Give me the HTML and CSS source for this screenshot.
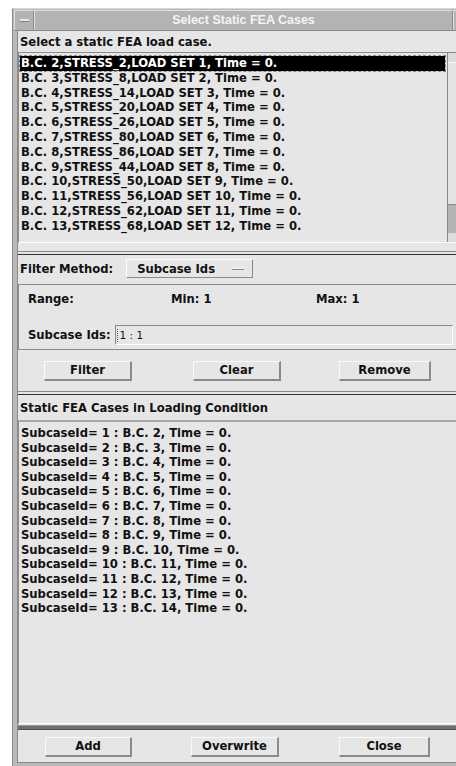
FILE: index.html
```html
<!DOCTYPE html>
<html>
<head>
<meta charset="utf-8">
<link rel="stylesheet" href="styles.css">
</head>
<body>
<div class="window">
  <div class="titlebar">
    <div class="tb-menu"><span class="tb-dash"></span></div>
    <div class="tb-title">Select Static FEA Cases</div>
    <div class="tb-min"><span class="tb-dot"></span></div>
    <div class="tb-max"></div>
  </div>
  <div class="client">
    <div class="label top-label">Select a static FEA load case.</div>
    <div class="listbox cases">
      <div class="list-items">
        <div class="row selected">B.C. 2,STRESS_2,LOAD SET 1, Time = 0.</div>
        <div class="row">B.C. 3,STRESS_8,LOAD SET 2, Time = 0.</div>
        <div class="row">B.C. 4,STRESS_14,LOAD SET 3, Time = 0.</div>
        <div class="row">B.C. 5,STRESS_20,LOAD SET 4, Time = 0.</div>
        <div class="row">B.C. 6,STRESS_26,LOAD SET 5, Time = 0.</div>
        <div class="row">B.C. 7,STRESS_80,LOAD SET 6, Time = 0.</div>
        <div class="row">B.C. 8,STRESS_86,LOAD SET 7, Time = 0.</div>
        <div class="row">B.C. 9,STRESS_44,LOAD SET 8, Time = 0.</div>
        <div class="row">B.C. 10,STRESS_50,LOAD SET 9, Time = 0.</div>
        <div class="row">B.C. 11,STRESS_56,LOAD SET 10, Time = 0.</div>
        <div class="row">B.C. 12,STRESS_62,LOAD SET 11, Time = 0.</div>
        <div class="row">B.C. 13,STRESS_68,LOAD SET 12, Time = 0.</div>
      </div>
      <div class="vscroll">
        <div class="arrow up"></div>
        <div class="slider"></div>
        <div class="trough"></div>
        <div class="arrow down"></div>
      </div>
    </div>
    <div class="separator"></div>
    <div class="filter-row">
      <span class="label">Filter Method:</span>
      <div class="option-menu"><span>Subcase Ids</span><span class="opt-bar"></span></div>
    </div>
    <div class="frame">
      <div class="range-row">
        <span class="label range-label">Range:</span>
        <span class="label range-min">Min: 1</span>
        <span class="label range-max">Max: 1</span>
      </div>
      <div class="ids-row">
        <span class="label">Subcase Ids:</span>
        <div class="textfield"><span class="caret"></span><span>1 : 1</span></div>
      </div>
    </div>
    <div class="button-row">
      <div class="button">Filter</div>
      <div class="button">Clear</div>
      <div class="button">Remove</div>
    </div>
    <div class="separator mid"></div>
    <div class="label section-label">Static FEA Cases in Loading Condition</div>
    <div class="listbox loading">
      <div class="row">SubcaseId= 1 : B.C. 2, Time = 0.</div>
      <div class="row">SubcaseId= 2 : B.C. 3, Time = 0.</div>
      <div class="row">SubcaseId= 3 : B.C. 4, Time = 0.</div>
      <div class="row">SubcaseId= 4 : B.C. 5, Time = 0.</div>
      <div class="row">SubcaseId= 5 : B.C. 6, Time = 0.</div>
      <div class="row">SubcaseId= 6 : B.C. 7, Time = 0.</div>
      <div class="row">SubcaseId= 7 : B.C. 8, Time = 0.</div>
      <div class="row">SubcaseId= 8 : B.C. 9, Time = 0.</div>
      <div class="row">SubcaseId= 9 : B.C. 10, Time = 0.</div>
      <div class="row">SubcaseId= 10 : B.C. 11, Time = 0.</div>
      <div class="row">SubcaseId= 11 : B.C. 12, Time = 0.</div>
      <div class="row">SubcaseId= 12 : B.C. 13, Time = 0.</div>
      <div class="row">SubcaseId= 13 : B.C. 14, Time = 0.</div>
    </div>
    <div class="separator thick"></div>
    <div class="button-row bottom">
      <div class="button">Add</div>
      <div class="button">Overwrite</div>
      <div class="button">Close</div>
    </div>
  </div>
</div>
</body>
</html>
```
FILE: styles.css
```css
html, body {
  margin: 0;
  padding: 0;
  background: #ffffff;
  overflow: hidden;
  width: 456px;
  height: 766px;
}

body {
  font-family: "DejaVu Sans", sans-serif;
  font-weight: 700;
  font-size: 11.6px;
  color: #111;
}

/* window frame */
.window {
  margin: 8px 0 0 12px;
  width: 470px;
  height: 758px;
  background: #b9b9b9;
  border-left: 1px solid #8a8a8a;
  border-top: 1px solid #d8d8d8;
  padding: 1px 0 3px 1px;
  box-sizing: border-box;
  display: flex;
  flex-direction: column;
}

.titlebar {
  height: 20px;
  display: flex;
  align-items: stretch;
  background: #b3b3b3;
  border-bottom: 1px solid #8a8a8a;
  flex-shrink: 0;
}

.tb-menu {
  width: 18px;
  border-right: 1px solid #8a8a8a;
  border-left: 1px solid #e0e0e0;
  border-top: 1px solid #e0e0e0;
  display: flex;
  align-items: center;
  justify-content: center;
}

.tb-dash {
  width: 9px;
  height: 2px;
  background: #e8e8e8;
  border-bottom: 1px solid #808080;
}

.tb-title {
  flex: 1;
  text-align: center;
  color: #f4f4f4;
  font-family: "Liberation Sans", sans-serif;
  font-weight: 700;
  font-size: 12.5px;
  line-height: 19px;
  border-top: 1px solid #e0e0e0;
  border-left: 1px solid #e0e0e0;
  border-right: 1px solid #8a8a8a;
}

.tb-min {
  width: 10px;
  border-top: 1px solid #e0e0e0;
  border-left: 1px solid #e0e0e0;
  border-right: 1px solid #8a8a8a;
  display: flex;
  align-items: center;
  justify-content: center;
}

.tb-dot {
  width: 2px;
  height: 2px;
  background: #d8d8d8;
  border: 1px solid #8a8a8a;
}

.tb-max {
  width: 16px;
  border-top: 1px solid #e0e0e0;
  border-left: 1px solid #e0e0e0;
}

/* client area */
.client {
  flex: 1;
  margin-left: 3px;
  border-left: 1px solid #8a8a8a;
  border-bottom: 1px solid #8a8a8a;
  background: #e6e6e6;
  display: flex;
  flex-direction: column;
  width: 439px;
  overflow: hidden;
}

.label {
  white-space: nowrap;
}

.top-label {
  height: 21px;
  line-height: 22px;
  padding-left: 2px;
  flex-shrink: 0;
}

.listbox {
  border-top: 1px solid #8a8a8a;
  border-left: 1px solid #8a8a8a;
  border-bottom: 1px solid #ffffff;
  background: #e6e6e6;
  flex-shrink: 0;
}

.cases {
  height: 191px;
  display: flex;
  box-sizing: border-box;
}

.list-items {
  flex: 1;
  padding: 3px 0 0 1px;
}

.row {
  height: 14.8px;
  line-height: 14.8px;
  white-space: nowrap;
  padding-left: 1px;
}

.row.selected {
  background: #000;
  color: #fff;
  outline: 1px dashed #888;
  margin-right: 2px;
}

.vscroll {
  width: 9px;
  border-left: 1px solid #8a8a8a;
  display: flex;
  flex-direction: column;
  background: #b9b9b9;
}

.arrow {
  height: 9px;
  background: #dcdcdc;
}

.slider {
  height: 141px;
  background: #e4e4e4;
  border-top: 1px solid #fafafa;
  border-bottom: 1px solid #8a8a8a;
}

.trough {
  flex: 1;
  background: #b4b4b4;
}

.separator {
  height: 2px;
  border-top: 1px solid #8a8a8a;
  border-bottom: 1px solid #303030;
  margin-top: 8px;
  background: #e6e6e6;
  flex-shrink: 0;
}

.separator.mid {
  margin-top: 2px;
}

.separator.thick {
  height: 3px;
  border-top: 1px solid #9a9a9a;
  border-bottom: 1px solid #505050;
  background: #707070;
  margin-top: 1px;
}

.filter-row {
  display: flex;
  align-items: center;
  height: 27px;
  padding-left: 2px;
  flex-shrink: 0;
}

.option-menu {
  margin-left: 13px;
  width: 127px;
  height: 19px;
  box-sizing: border-box;
  border-top: 1px solid #fff;
  border-left: 1px solid #fff;
  border-right: 1px solid #8a8a8a;
  border-bottom: 1px solid #8a8a8a;
  display: flex;
  align-items: center;
  padding-left: 10px;
  position: relative;
}

.opt-bar {
  position: absolute;
  right: 8px;
  top: 7px;
  width: 12px;
  height: 2px;
  background: #f0f0f0;
  border-bottom: 1px solid #8a8a8a;
}

.frame {
  margin-top: 2px;
  height: 66px;
  box-sizing: border-box;
  border-top: 1px solid #8a8a8a;
  border-left: 1px solid #8a8a8a;
  border-bottom: 1px solid #8a8a8a;
  display: flex;
  flex-direction: column;
  padding: 6px 4px 0 9px;
  flex-shrink: 0;
}

.range-row {
  display: flex;
  height: 16px;
  align-items: center;
}

.range-label {
  width: 143px;
}

.range-min {
  width: 145px;
}

.ids-row {
  display: flex;
  align-items: center;
  margin-top: 18px;
}

.textfield {
  flex: 1;
  margin-left: 4px;
  height: 20px;
  box-sizing: border-box;
  border-top: 1px solid #8a8a8a;
  border-left: 1px solid #8a8a8a;
  border-bottom: 1px solid #fff;
  border-right: 1px solid #fff;
  display: flex;
  align-items: center;
  font-weight: 400;
  font-size: 10.5px;
  padding-left: 1px;
}

.caret {
  width: 1px;
  height: 13px;
  border-left: 1px dotted #555;
  margin-right: 1px;
}

.button-row {
  display: flex;
  height: 39px;
  padding-top: 11px;
  box-sizing: border-box;
  align-items: flex-start;
  flex-shrink: 0;
}

.button {
  width: 88px;
  height: 20px;
  box-sizing: border-box;
  border-top: 1px solid #fafafa;
  border-left: 1px solid #fafafa;
  border-right: 2px solid #8a8a8a;
  border-bottom: 2px solid #8a8a8a;
  text-align: center;
  line-height: 17px;
}

.button-row .button:nth-child(1) { margin-left: 26px; }
.button-row .button:nth-child(2) { margin-left: 61px; }
.button-row .button:nth-child(3) { margin-left: 58px; width: 92px; }

.section-label {
  height: 25px;
  line-height: 26px;
  padding-left: 2px;
  flex-shrink: 0;
}

.loading {
  height: 304px;
  box-sizing: border-box;
  padding: 4px 0 0 1px;
  border-top: 2px solid #a8a8a8;
}

.loading .row {
  height: 14.6px;
  line-height: 14.6px;
}

.button-row.bottom {
  padding-top: 7px;
  height: 32px;
  flex-shrink: 1;
}

.button-row.bottom .button:nth-child(1) { margin-left: 27px; width: 87px; }
.button-row.bottom .button:nth-child(2) { margin-left: 59px; }
.button-row.bottom .button:nth-child(3) { margin-left: 60px; width: 91px; }
```
